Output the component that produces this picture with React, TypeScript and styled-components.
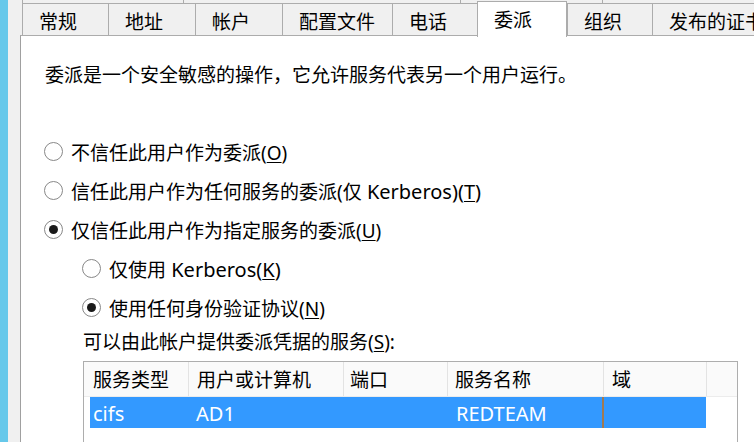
import React from "react";
import styled, { createGlobalStyle } from "styled-components";

const Global = createGlobalStyle`
  html, body { margin: 0; padding: 0; width: 754px; height: 442px; overflow: hidden; background: #f0f0f0; }
  body { font-family: "Noto Sans", "Noto Sans CJK SC", sans-serif; font-size: 19px; color: #000; }
  #root { height: 442px; }
`;

const Screen = styled.div`
  display: flex;
  height: 442px;
  width: 754px;
  overflow: hidden;
`;

const BlueStrip = styled.div`
  width: 8px;
  flex: none;
  background: #66c8ea;
`;

const Gray = styled.div`
  flex: 1;
  background: #f0f0f0;
  padding-left: 12px;
  display: flex;
  flex-direction: column;
  min-width: 0;
  overflow: hidden;
`;

const BackRow = styled.div`
  display: flex;
  height: 3px;
  margin-left: 2px;
  flex: none;
`;

const BackTab = styled.div<{ $w: number }>`
  width: ${(p) => p.$w}px;
  flex: none;
  border-left: 1px solid #acacac;
  background: #f0f0f0;
  box-sizing: border-box;
`;

const FrontRow = styled.div`
  display: flex;
  height: 32px;
  margin-left: 2px;
  flex: none;
  position: relative;
  z-index: 2;
`;

const Tab = styled.div<{ $w: number; $active?: boolean }>`
  width: ${(p) => p.$w}px;
  flex: none;
  box-sizing: border-box;
  border-top: 1px solid #acacac;
  border-left: 1px solid #acacac;
  background: ${(p) => (p.$active ? "#ffffff" : "#f0f0f0")};
  ${(p) =>
    p.$active
      ? `margin-top: -2px; height: 36px; border-right: 1px solid #acacac; padding: 4px 0 0 16px;`
      : `height: 32px; padding: 4px 0 0 16px;`}
  line-height: 28px;
  white-space: nowrap;
  overflow: hidden;
`;

const Panel = styled.div`
  flex: 1;
  background: #fff;
  border-left: 1px solid #a0a0a0;
  border-top: 1px solid #acacac;
  padding: 24px 0 0 24px;
  display: flex;
  flex-direction: column;
  position: relative;
  z-index: 1;
`;

const Desc = styled.div`
  line-height: 30px;
  height: 30px;
  white-space: nowrap;
`;

const Options = styled.div`
  margin-top: 42px;
  display: flex;
  flex-direction: column;
`;

const Option = styled.div<{ $indent?: boolean }>`
  display: flex;
  align-items: center;
  height: 39px;
  padding-left: ${(p) => (p.$indent ? 38 : 0)}px;
  white-space: pre;
`;

const Radio = styled.span<{ $checked?: boolean }>`
  width: 19px;
  height: 19px;
  box-sizing: border-box;
  border: 1px solid #888888;
  border-radius: 50%;
  background: #fff;
  margin-right: 8px;
  margin-left: -1px;
  display: inline-flex;
  align-items: center;
  justify-content: center;
  flex: none;
  &::after {
    content: "";
    display: ${(p) => (p.$checked ? "block" : "none")};
    width: 9px;
    height: 9px;
    border-radius: 50%;
    background: #1a1a1a;
  }
`;

const Lat = styled.span`
  font-size: 20px;
  white-space: pre;
`;

const Key = styled.span`
  text-decoration: underline;
  text-underline-offset: 2px;
  text-decoration-thickness: 1px;
`;

const Label = styled.div`
  margin-left: 38px;
  line-height: 30px;
  height: 30px;
  white-space: nowrap;
`;

const Table = styled.div`
  margin: 4px 0 0 38px;
  width: 655px;
  height: 120px;
  box-sizing: border-box;
  border: 1px solid #adadad;
  background: #fff;
`;

const Header = styled.div`
  display: grid;
  grid-template-columns: 105px 155px 104px 156px 103px 1fr;
  height: 34px;
  background: #fafafa;
  border-bottom: 1px solid #ececec;
`;

const HeadCell = styled.div<{ $pad?: number }>`
  border-right: 1px solid #e3e3e3;
  padding: 2px 0 0 ${(p) => p.$pad ?? 8}px;
  line-height: 32px;
  white-space: nowrap;
  overflow: hidden;
  &:last-child { border-right: none; }
`;

const Row = styled.div`
  display: grid;
  grid-template-columns: 98px 155px 104px 156px 103px;
  margin-left: 6px;
  width: 616px;
  height: 31px;
  background: #3399ff;
  color: #fff;
`;

const Cell = styled.div<{ $pad?: number; $mark?: boolean }>`
  padding: 2px 0 0 ${(p) => p.$pad ?? 8}px;
  line-height: 29px;
  white-space: nowrap;
  overflow: hidden;
  font-size: 20px;
  ${(p) => (p.$mark ? "border-left: 2px solid #a07a52; margin-left: -1px;" : "")}
`;

export default function App() {
  const back = [161, 277, 142, 200];
  const tabs: { t: string; w: number; active?: boolean }[] = [
    { t: "常规", w: 86 },
    { t: "地址", w: 87 },
    { t: "帐户", w: 87 },
    { t: "配置文件", w: 110 },
    { t: "电话", w: 85 },
    { t: "委派", w: 90, active: true },
    { t: "组织", w: 85 },
    { t: "发布的证书", w: 120 },
  ];
  return (
    <>
      <Global />
      <Screen>
        <BlueStrip />
        <Gray>
          <BackRow>
            {back.map((w, i) => (
              <BackTab key={i} $w={w} />
            ))}
          </BackRow>
          <FrontRow>
            {tabs.map((t) => (
              <Tab key={t.t} $w={t.w} $active={t.active}>
                {t.t}
              </Tab>
            ))}
          </FrontRow>
          <Panel>
            <Desc>委派是一个安全敏感的操作，它允许服务代表另一个用户运行。</Desc>
            <Options>
              <Option>
                <Radio />
                <span>不信任此用户作为委派(<Key>O</Key>)</span>
              </Option>
              <Option>
                <Radio />
                <span>
                  信任此用户作为任何服务的委派(仅<Lat>{" Kerberos)("}<Key>T</Key>)</Lat>
                </span>
              </Option>
              <Option>
                <Radio $checked />
                <span>仅信任此用户作为指定服务的委派(<Key>U</Key>)</span>
              </Option>
              <Option $indent>
                <Radio />
                <span>
                  仅使用<Lat>{" Kerberos("}<Key>K</Key>)</Lat>
                </span>
              </Option>
              <Option $indent>
                <Radio $checked />
                <span>使用任何身份验证协议(<Key>N</Key>)</span>
              </Option>
            </Options>
            <Label>
              可以由此帐户提供委派凭据的服务(<Key>S</Key>):
            </Label>
            <Table>
              <Header>
                <HeadCell $pad={9}>服务类型</HeadCell>
                <HeadCell>用户或计算机</HeadCell>
                <HeadCell $pad={6}>端口</HeadCell>
                <HeadCell $pad={7}>服务名称</HeadCell>
                <HeadCell>域</HeadCell>
                <HeadCell />
              </Header>
              <Row>
                <Cell $pad={3}>cifs</Cell>
                <Cell>AD1</Cell>
                <Cell />
                <Cell $pad={9}>REDTEAM</Cell>
                <Cell $mark />
              </Row>
            </Table>
          </Panel>
        </Gray>
      </Screen>
    </>
  );
}
